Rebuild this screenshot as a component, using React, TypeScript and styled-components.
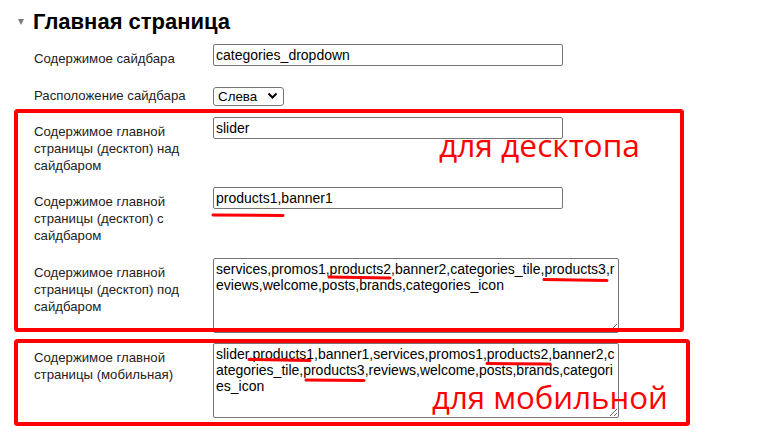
import React from "react";
import styled, { createGlobalStyle } from "styled-components";

const GlobalStyle = createGlobalStyle`
  html, body { margin: 0; padding: 0; background: #fff; }
  body { font-family: "Liberation Sans", Arial, sans-serif; }
`;

const Page = styled.div`
  position: relative;
  width: 761px;
  height: 432px;
  overflow: hidden;
  box-sizing: border-box;
  padding: 9px 0 0 18px;
  background: #fff;
`;

const SectionTitle = styled.h2`
  display: flex;
  align-items: center;
  gap: 9px;
  margin: 0;
  height: 26px;
  font: bold 22px/26px "Liberation Sans", Arial, sans-serif;
  color: #000;
`;

const Caret = styled.span`
  width: 0;
  height: 0;
  border-left: 3.5px solid transparent;
  border-right: 3.5px solid transparent;
  border-top: 6px solid #7a7a7a;
`;

const Form = styled.div`
  display: flex;
  flex-direction: column;
  padding-left: 16px;
`;

const Row = styled.div<{ $gap: number }>`
  display: grid;
  grid-template-columns: 179px auto;
  align-items: start;
  margin-top: ${(p) => p.$gap}px;
`;

const Label = styled.label<{ $inline?: boolean }>`
  padding: ${(p) => (p.$inline ? 0 : 6)}px 8px 0 0;
  font-size: 13.2px;
  line-height: 17px;
  color: #222;
`;

const TextInput = styled.input`
  box-sizing: border-box;
  width: 350px;
  height: 22px;
  margin: 0;
  padding: 1px 2px;
  border: 1px solid #767676;
  border-radius: 2px;
  background: #fff;
  color: #000;
  font: 14px "Liberation Sans", Arial, sans-serif;
  outline: none;
`;

const TextArea = styled.textarea`
  display: block;
  box-sizing: border-box;
  width: 406px;
  height: 75px;
  margin: 0;
  padding: 2px;
  border: 1px solid #767676;
  border-radius: 2px;
  background: #fff;
  color: #000;
  font: 14px "Liberation Sans", Arial, sans-serif;
  outline: none;
`;

const SelectBox = styled.div`
  position: relative;
  width: 71px;
  height: 19px;
`;

const Select = styled.select`
  appearance: none;
  -webkit-appearance: none;
  box-sizing: border-box;
  width: 71px;
  height: 19px;
  margin: 0;
  padding: 0 0 0 4px;
  border: 1px solid #767676;
  border-radius: 3px;
  background: #fff;
  color: #000;
  font: 13.33px "Liberation Sans", Arial, sans-serif;
  outline: none;
`;

const Chevron = styled.svg`
  position: absolute;
  left: 54px;
  top: 5px;
  width: 11px;
  height: 8px;
  pointer-events: none;
`;

const Markup = styled.svg`
  position: absolute;
  left: 0;
  top: 0;
  width: 761px;
  height: 432px;
  pointer-events: none;
`;

const Note = styled.span<{ $x: number; $y: number; $size: number }>`
  position: absolute;
  left: ${(p) => p.$x}px;
  top: ${(p) => p.$y}px;
  font: 400 ${(p) => p.$size}px/1 "Open Sans", "Noto Sans", sans-serif;
  color: #ff0000;
  white-space: nowrap;
  pointer-events: none;
`;

type Field = {
  kind: "input" | "select" | "area";
  label: string;
  value: string;
  gap: number;
};

const fields: Field[] = [
  { kind: "input", label: "Содержимое сайдбара", value: "categories_dropdown", gap: 9 },
  { kind: "select", label: "Расположение сайдбара", value: "Слева", gap: 20 },
  { kind: "input", label: "Содержимое главной страницы (десктоп) над сайдбаром", value: "slider", gap: 11 },
  { kind: "input", label: "Содержимое главной страницы (десктоп) с сайдбаром", value: "products1,banner1", gap: 13 },
  {
    kind: "area",
    label: "Содержимое главной страницы (десктоп) под сайдбаром",
    value: "services,promos1,products2,banner2,categories_tile,products3,reviews,welcome,posts,brands,categories_icon",
    gap: 14,
  },
  {
    kind: "area",
    label: "Содержимое главной страницы (мобильная)",
    value: "slider,products1,banner1,services,promos1,products2,banner2,categories_tile,products3,reviews,welcome,posts,brands,categories_icon",
    gap: 10,
  },
];

const strokes = [
  "M213 215 L283 215.5",
  "M329 277 L390 278",
  "M544 279.5 L607 280.5",
  "M249 359.5 L310 360.5",
  "M487 363.5 L550 364",
  "M306 380 L364 380.5",
];

export default function App() {
  return (
    <>
      <GlobalStyle />
      <Page>
        <SectionTitle>
          <Caret />
          Главная страница
        </SectionTitle>
        <Form>
          {fields.map((f, i) => (
            <Row key={i} $gap={f.gap}>
              <Label $inline={f.kind === "select"}>{f.label}</Label>
              {f.kind === "input" && <TextInput readOnly defaultValue={f.value} />}
              {f.kind === "select" && (
                <SelectBox>
                  <Select defaultValue="left">
                    <option value="left">{f.value}</option>
                    <option value="right">Справа</option>
                  </Select>
                  <Chevron viewBox="0 0 11 8">
                    <polyline points="1.5,1.5 5.5,5.5 9.5,1.5" fill="none" stroke="#000" strokeWidth="2" />
                  </Chevron>
                </SelectBox>
              )}
              {f.kind === "area" && <TextArea readOnly defaultValue={f.value} />}
            </Row>
          ))}
        </Form>

        <Markup viewBox="0 0 761 432">
          <rect x="16" y="111" width="666" height="219" rx="1.5" fill="none" stroke="#ff0000" strokeWidth="4" />
          <rect x="16" y="341" width="672" height="83" rx="1.5" fill="none" stroke="#ff0000" strokeWidth="4" />
          {strokes.map((d, i) => (
            <path key={i} d={d} fill="none" stroke="#ff0000" strokeWidth="3" strokeLinecap="round" />
          ))}
        </Markup>
        <Note $x={439} $y={128.5} $size={31.7}>для десктопа</Note>
        <Note $x={432} $y={382} $size={31.2}>для мобильной</Note>
      </Page>
    </>
  );
}
